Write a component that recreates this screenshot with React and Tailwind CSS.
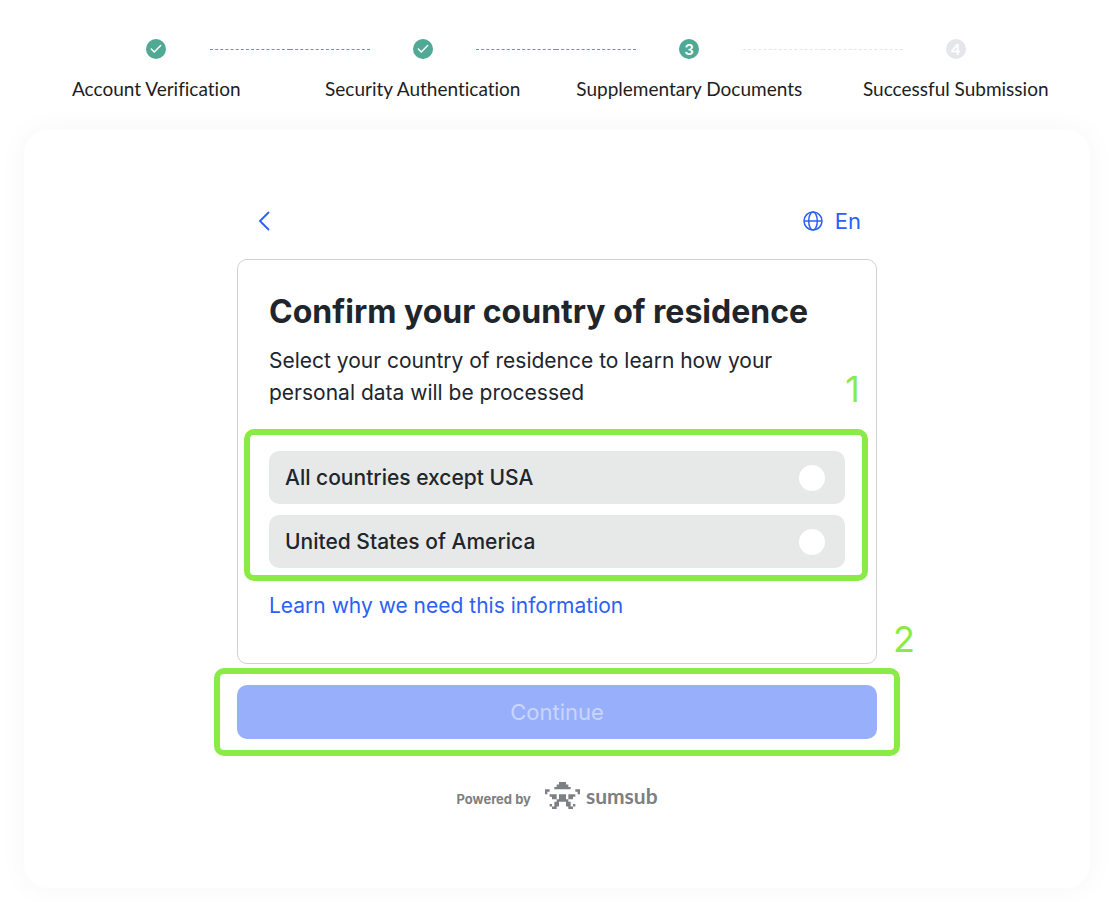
import { Check } from "lucide-react";
import { useState } from "react";

const steps = [
  { label: "Account Verification", status: "done" },
  { label: "Security Authentication", status: "done" },
  { label: "Supplementary Documents", status: "current" },
  { label: "Successful Submission", status: "pending" }
];

const countries = [
  { value: "other", label: "All countries except USA" },
  { value: "usa", label: "United States of America" }
];

// one string per row of the pixel mascot
const mascotRows = [
  "......###......",
  ".....#####.....",
  "....#######....",
  "##...........##",
  "#.............#",
  "..###.###.###..",
  "...##.###.##...",
  ".....#####.....",
  "....##...##....",
  "..#.##...##.#..",
  "...##.....##..."
];

const mascotPath = mascotRows
  .flatMap((row, y) => [...row.matchAll(/#+/g)].map((run) => `M${run.index} ${y}h${run[0].length}v1h-${run[0].length}z`))
  .join("");

function Connector({ visible, active }) {
  if (!visible) return <span />;
  return <span className={`border-t border-dashed ${active ? "border-[#4fa995]" : "border-[#e5e6eb]"}`} />;
}

function StepIcon({ status, number }) {
  if (status === "done") {
    return (
      <span className="grid size-5 place-items-center rounded-full bg-[#4fa995] text-white">
        <Check size={14} strokeWidth={2.5} />
      </span>
    );
  }
  return (
    <span
      className={`grid size-5 place-items-center rounded-full font-['Lato',sans-serif] text-base leading-5 font-bold text-white ${
        status === "current" ? "bg-[#4fa995]" : "bg-[#e5e6eb]"
      }`}
    >
      {number}
    </span>
  );
}

function Stepper() {
  return (
    <ol className="grid grid-cols-4 pr-[27px] pl-[23px]">
      {steps.map((step, index) => (
        <li key={step.label} className="flex flex-col gap-4">
          <div className="grid grid-cols-[80px_1fr_80px] items-center">
            <Connector visible={index > 0} active={steps[index - 1]?.status === "done"} />
            <span className="justify-self-center">
              <StepIcon status={step.status} number={index + 1} />
            </span>
            <Connector visible={index < steps.length - 1} active={step.status === "done"} />
          </div>
          <span className="text-center font-['Lato',sans-serif] text-[19px] leading-7 text-[#1d1d1f] [font-variant-ligatures:none]">
            {step.label}
          </span>
        </li>
      ))}
    </ol>
  );
}

function BackIcon() {
  return (
    <svg width="12" height="20" viewBox="0 0 12 20" fill="none" stroke="currentColor" strokeWidth="1.8" strokeLinecap="round" strokeLinejoin="round" aria-hidden="true">
      <path d="M9.500 1.500 1 10l8.500 8.500" />
    </svg>
  );
}

function GlobeIcon() {
  return (
    <svg width="20" height="20" viewBox="0 0 20 20" fill="none" stroke="currentColor" strokeWidth="1.5" aria-hidden="true">
      <circle cx="10" cy="10" r="9" />
      <ellipse cx="10" cy="10" rx="4.3" ry="9" />
      <path d="M1 10h18" />
    </svg>
  );
}

function Mascot() {
  return (
    <svg width="35" height="27" viewBox="0 0 15 11" preserveAspectRatio="none" fill="currentColor" aria-hidden="true">
      <path d={mascotPath} />
    </svg>
  );
}

export default function App() {
  const [country, setCountry] = useState(null);

  return (
    <main className="min-h-screen bg-white pt-[39px] pb-[14px] font-['Inter',sans-serif] text-[#20252c]">
      <Stepper />

      <section className="mt-[27px] mr-[26px] ml-6 rounded-3xl bg-white px-6 pt-[75px] pb-[79px] shadow-[0_0_30px_rgba(0,0,0,0.04)]">
        <div className="mx-auto max-w-[640px]">
          <header className="flex h-8 items-center justify-between px-4 text-[#2c60f5]">
            <button type="button" aria-label="Back" className="grid size-6 place-items-center">
              <BackIcon />
            </button>
            <button type="button" className="flex items-center gap-3 text-[22px] leading-8">
              <GlobeIcon />
              En
            </button>
          </header>

          <div className="mt-[22px] rounded-[10px] border border-[#d0d1d3] px-[31px] pt-8 pb-[41px]">
            <h1 className="text-[32px] leading-10 font-bold">Confirm your country of residence</h1>
            <p className="mt-[13px] text-[21px] leading-8">
              Select your country of residence to learn how your personal data will be processed
            </p>

            <fieldset aria-label="Country of residence" className="relative mt-[42px] flex flex-col gap-[11px]">
              {countries.map(({ value, label }) => (
                <label key={value} className="flex h-[53px] items-center justify-between rounded-[10px] bg-[#e7e9e8] pr-5 pl-4 text-[21px] leading-8 font-medium">
                  {label}
                  <input
                    className="size-[26px] appearance-none rounded-full bg-white checked:border-8 checked:border-[#2c60f5]"
                    type="radio"
                    name="country"
                    value={value}
                    checked={country === value}
                    onChange={() => setCountry(value)}
                  />
                </label>
              ))}
              <span className="pointer-events-none absolute -top-[22px] -right-[23px] -bottom-[13px] -left-[25px] rounded-[10px] border-6 border-[#8aeb47]" />
              <span className="absolute -top-[82px] -right-[15px] text-4xl text-[#8aeb47]">1</span>
            </fieldset>

            <a href="#why" className="mt-[22px] block text-[21px] leading-8 text-[#2c60f5]">
              Learn why we need this information
            </a>
          </div>

          <div className="relative mt-[21px]">
            <button type="button" disabled={!country} className="h-[54px] w-full rounded-[10px] bg-[#2c60f5] text-[22px] leading-8 text-white disabled:bg-[#98b0fb] disabled:text-[#c9d5fd]">
              Continue
            </button>
            <span className="pointer-events-none absolute -inset-x-[23px] -inset-y-[17px] rounded-[10px] border-6 border-[#8aeb47]" />
            <span className="absolute -top-[66px] -right-[38px] text-4xl text-[#8aeb47]">2</span>
          </div>

          <footer className="mt-[43px] flex items-end justify-center gap-[14px] text-[#7c7f83]">
            <span className="text-[13px] leading-5 font-bold">Powered by</span>
            <span className="flex items-center gap-[6px]">
              <Mascot />
              <span className="font-['Lato',sans-serif] text-[21px] leading-6 font-bold">sumsub</span>
            </span>
          </footer>
        </div>
      </section>
    </main>
  );
}
